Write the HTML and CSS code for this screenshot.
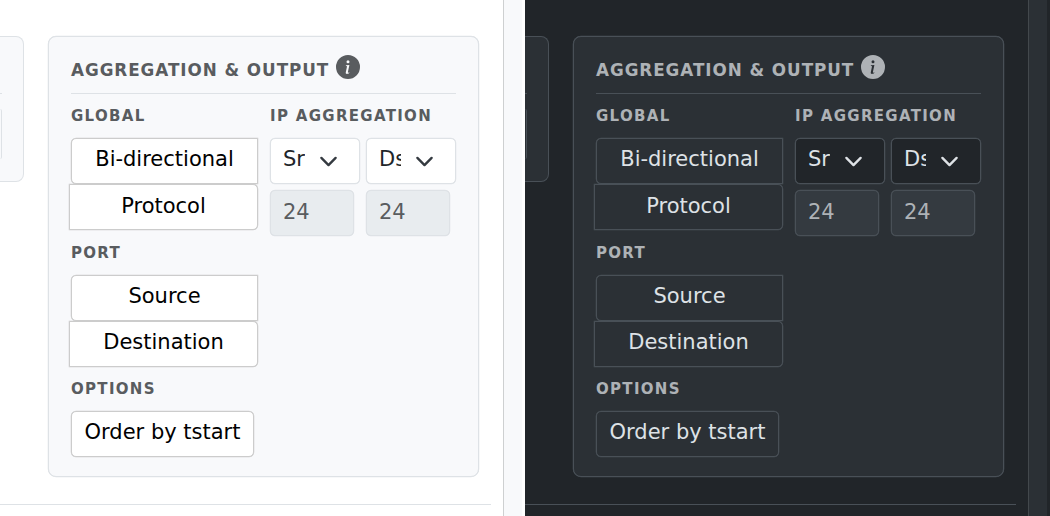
FILE: index.html
```html
<!DOCTYPE html>
<html lang="en">
<head>
<meta charset="utf-8">
<title>Aggregation &amp; Output</title>
<link rel="stylesheet" href="styles.css">
</head>
<body>
<svg class="defs" aria-hidden="true">
  <symbol id="info" viewBox="0 0 16 16"><path fill="currentColor" d="M8 16A8 8 0 1 0 8 0a8 8 0 0 0 0 16m.93-9.412-1 4.705c-.07.34.029.533.304.533.194 0 .487-.07.686-.246l-.088.416c-.287.346-.92.598-1.465.598-.703 0-1.002-.422-.808-1.319l.738-3.468c.064-.293.006-.399-.287-.47l-.451-.081.082-.381 2.29-.287zM8 5.5a1 1 0 1 1 0-2 1 1 0 0 1 0 2"/></symbol>
  <symbol id="chevron" viewBox="0 0 16 16"><path fill="none" stroke="currentColor" stroke-linecap="round" stroke-linejoin="round" stroke-width="2" d="m2 5 6 6 6-6"/></symbol>
</svg>
<div class="themes">
  <section class="pane light">
    <main class="main">
      <div class="cards">
        <div class="card-prev"><div class="prev-rule"></div><div class="prev-field"></div></div>
        <div class="card">
          <h2 class="title"><span>Aggregation &amp; Output</span><svg class="info"><use href="#info"/></svg></h2>
          <div class="columns">
            <div class="col-left">
              <h3 class="label">Global</h3>
              <div class="group"><button class="btn first">Bi-directional</button><button class="btn last lower">Protocol</button></div>
              <h3 class="label">Port</h3>
              <div class="group port"><button class="btn first">Source</button><button class="btn last">Destination</button></div>
              <h3 class="label">Options</h3>
              <button class="btn single">Order by tstart</button>
            </div>
            <div class="col-right">
              <h3 class="label">IP Aggregation</h3>
              <div class="fields">
                <div class="select"><span class="value">Src</span><svg class="chevron"><use href="#chevron"/></svg></div>
                <div class="select"><span class="value">Dst</span><svg class="chevron"><use href="#chevron"/></svg></div>
                <div class="input">24</div>
                <div class="input">24</div>
              </div>
            </div>
          </div>
        </div>
      </div>
      <div class="footer-rule"></div>
    </main>
    <aside class="side"></aside>
  </section>
  <section class="pane dark">
    <main class="main">
      <div class="cards">
        <div class="card-prev"><div class="prev-rule"></div><div class="prev-field"></div></div>
        <div class="card">
          <h2 class="title"><span>Aggregation &amp; Output</span><svg class="info"><use href="#info"/></svg></h2>
          <div class="columns">
            <div class="col-left">
              <h3 class="label">Global</h3>
              <div class="group"><button class="btn first">Bi-directional</button><button class="btn last lower">Protocol</button></div>
              <h3 class="label">Port</h3>
              <div class="group port"><button class="btn first">Source</button><button class="btn last">Destination</button></div>
              <h3 class="label">Options</h3>
              <button class="btn single">Order by tstart</button>
            </div>
            <div class="col-right">
              <h3 class="label">IP Aggregation</h3>
              <div class="fields">
                <div class="select"><span class="value">Src</span><svg class="chevron"><use href="#chevron"/></svg></div>
                <div class="select"><span class="value">Dst</span><svg class="chevron"><use href="#chevron"/></svg></div>
                <div class="input">24</div>
                <div class="input">24</div>
              </div>
            </div>
          </div>
        </div>
      </div>
      <div class="footer-rule"></div>
    </main>
    <aside class="side"></aside>
  </section>
</div>
</body>
</html>
```
FILE: styles.css
```css
* { box-sizing: border-box; }
body { margin: 0; font-family: "DejaVu Sans", sans-serif; font-size: 21px; overflow: hidden; }
.defs { display: none; }
.themes { display: grid; grid-template-columns: 525px 525px; height: 516px; }

.light {
  --page: #ffffff; --panel: #f8f9fb; --line: #dee2e6; --side-line: #ced0d1;
  --muted: #595c5f; --text: #212529; --chevron: #343a40;
  --btn-bg: #ffffff; --btn-line: #cccccc; --btn-text: #000000;
  --field: #ffffff; --disabled: #e8ecef; --prev-line: #dee2e6;
}
.dark {
  --page: #212529; --panel: #2b3035; --line: #495057; --side-line: #43484c;
  --muted: #aeb2b6; --text: #dee2e6; --chevron: #dee2e6;
  --btn-bg: #2b3035; --btn-line: #495057; --btn-text: #dee2e6;
  --field: #212529; --disabled: #343a40; --prev-line: #495057;
}

.pane { display: grid; grid-template-columns: 503px 19px; background: var(--page); overflow: hidden; }
.side { background: var(--panel); border-left: 1px solid var(--side-line); }
.main { padding-top: 36px; }
.cards { display: flex; align-items: flex-start; gap: 24px; }

.card-prev {
  width: 24px; height: 146px; padding-top: 56px;
  background: var(--panel); border: 1px solid var(--line); border-left: 0;
  border-radius: 0 8px 8px 0;
}
.prev-rule { width: 2px; height: 1px; background: var(--line); }
.prev-field { width: 2px; height: 50px; margin-top: 15px; border-right: 1px solid var(--prev-line); border-radius: 0 3px 3px 0; }

.card {
  width: 431px; height: 441px; padding: 16px 22px;
  background: var(--panel); border: 1px solid var(--line); border-radius: 8px;
}
.title {
  display: flex; align-items: flex-start; justify-content: flex-start; height: 41px; margin: 0;
  border-bottom: 1px solid var(--line); color: var(--muted);
  font-size: 16.8px; line-height: 20px; letter-spacing: .94px; text-transform: uppercase;
  white-space: nowrap;
}
.title span { width: 265px; padding-top: 7px; }
.info { width: 24px; height: 24px; margin-top: 2px; flex: none; }
.columns { display: grid; grid-template-columns: 187px 187px; column-gap: 12px; padding-top: 13px; }
.label {
  margin: 0 0 13px; height: 18px; line-height: 18px; white-space: nowrap;
  font-size: 15px; letter-spacing: 1.31px; text-transform: uppercase; color: var(--muted);
}
.btn {
  display: block; height: 46px; padding: 0 0 4px; font: inherit; line-height: 40px;
  background: var(--btn-bg); color: var(--btn-text); border: 1px solid var(--btn-line);
}
.first { width: 187px; border-radius: 5px 0 0 5px; }
.last { width: 189px; margin-left: -2px; border-radius: 0 5px 5px 0; }
.lower { padding-bottom: 2px; }
.single { width: 183px; border-radius: 5px; }
.card, .select, .input { box-shadow: 0 0 0 .25px var(--line); }
.first, .last, .single { box-shadow: 0 0 0 .25px var(--btn-line); }
.group { height: 106px; }
.port { height: 105px; }
.fields { display: grid; grid-template-columns: 90px 90px; gap: 6px; }
.select, .input {
  display: flex; height: 46px; padding-left: 12px; border: 1px solid var(--line);
  border-radius: 5px; line-height: 42px; color: var(--text);
}
.select { background: var(--field); align-items: flex-start; line-height: 40px; }
.value { width: 22px; overflow: hidden; white-space: nowrap; }
.chevron { width: 19px; height: 19px; margin: 13px 0 0 14px; color: var(--chevron); }
.input { width: 84px; background: var(--disabled); color: var(--muted); }
.footer-rule { width: 491px; height: 1px; margin-top: 27px; background: var(--line); }
```
